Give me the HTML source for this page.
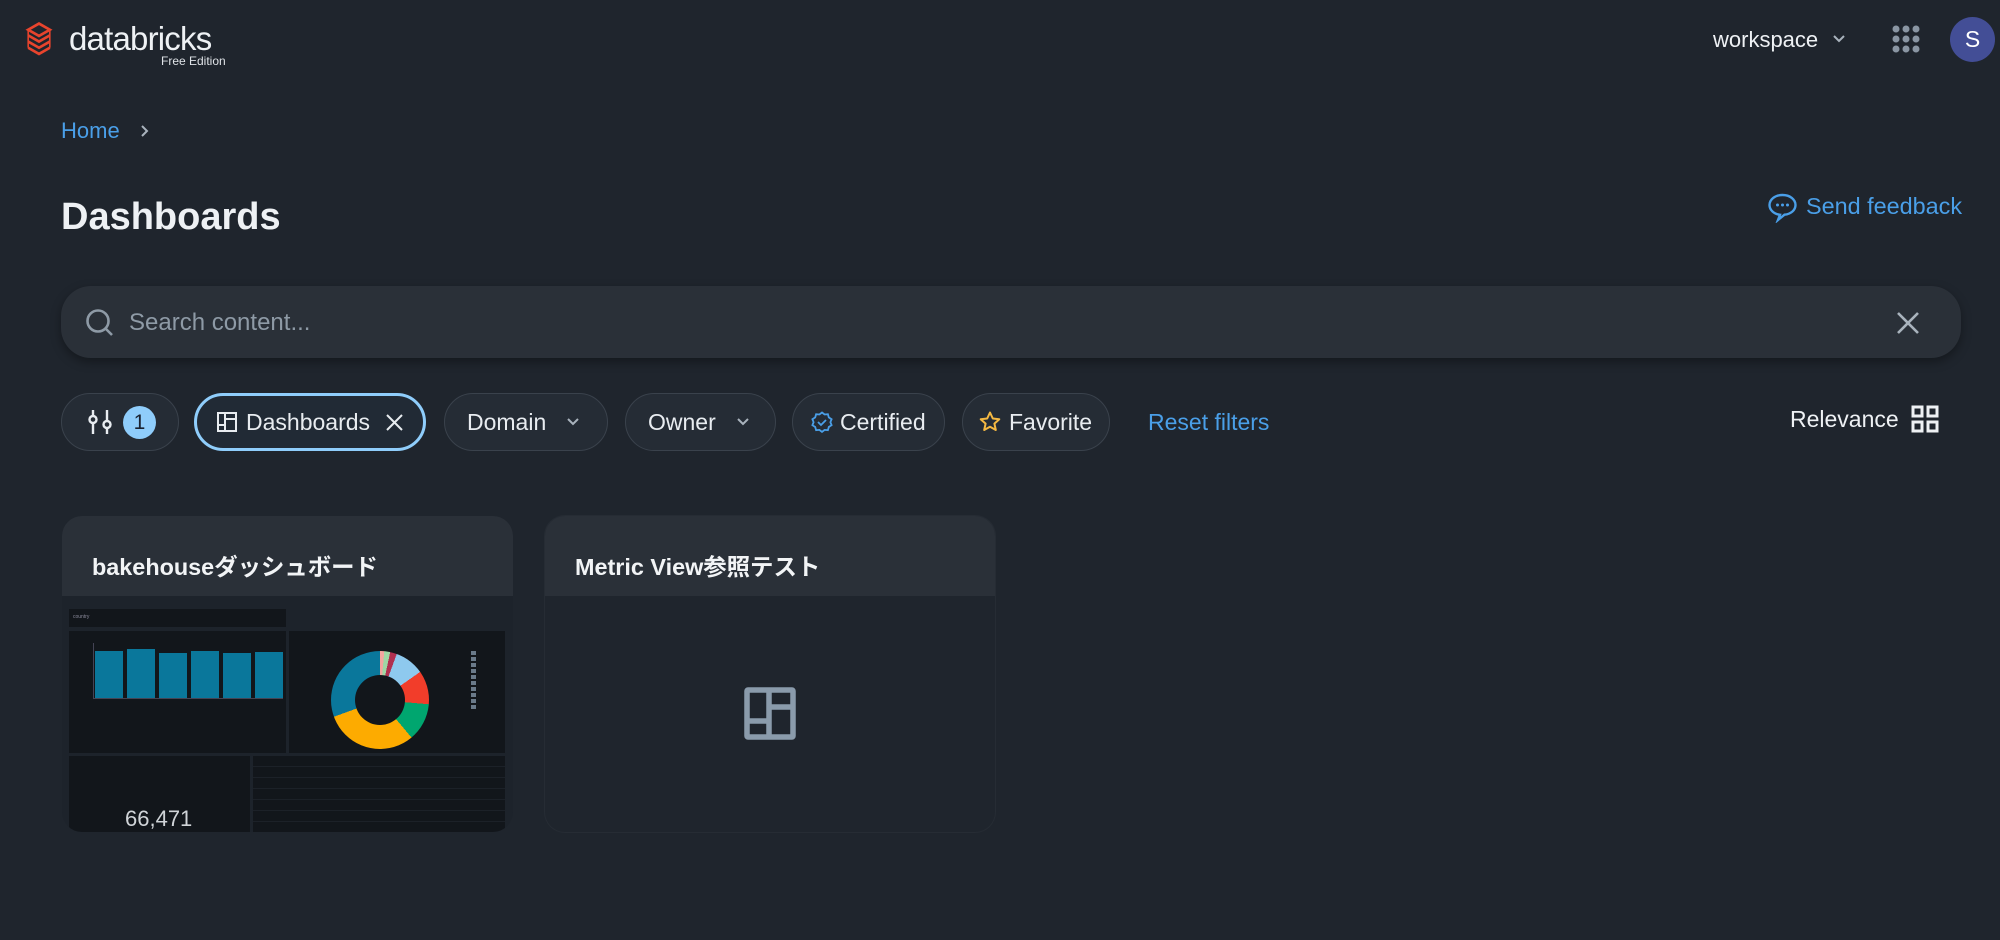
<!DOCTYPE html>
<html><head><meta charset="utf-8"><style>
*{box-sizing:border-box;margin:0;padding:0}
body{width:2000px;height:940px;overflow:hidden;background:#1f252d;font-family:"Liberation Sans","Noto Sans CJK JP",sans-serif;color:#e8ecf0;position:relative}
.a{position:absolute}
.pill{position:absolute;top:393px;height:58px;border-radius:29px;background:#252c35;border:1px solid #3a424c;display:flex;align-items:center;font-size:23px;color:#e8ecf0}
.panel{position:absolute;background:#12161b}
</style></head><body>
<!-- logo -->
<svg class="a" style="left:24px;top:22px" width="30" height="34" viewBox="0 0 25 33"><g fill="none" stroke="#e8442d" stroke-width="2.6"><path d="M12.5 1.5L23 7.5 12.5 13.5 2 7.5z"/><path d="M2 13l10.5 6L23 13"/><path d="M2 19l10.5 6L23 19"/><path d="M2 25l10.5 6L23 25"/><path d="M2 7.5v17.5M23 7.5v17.5" stroke-width="1.5"/></g></svg>
<div class="a" style="left:69px;top:20px;font-size:33px;color:#eef1f4;letter-spacing:-0.8px">databricks</div>
<div class="a" style="left:161px;top:54px;font-size:12px;color:#dfe3e7">Free Edition</div>
<!-- top right -->
<div class="a" style="left:1713px;top:27px;font-size:22px;color:#eef1f4">workspace</div>
<svg class="a" style="left:1832px;top:34px" width="14" height="10"><path d="M2 2l5 5 5-5" stroke="#a9b3bd" stroke-width="2" fill="none"/></svg>
<svg class="a" style="left:1892px;top:25px" width="28" height="28"><g fill="#8a96a3"><circle cx="4" cy="4" r="3.5"/><circle cx="14" cy="4" r="3.5"/><circle cx="24" cy="4" r="3.5"/><circle cx="4" cy="14" r="3.5"/><circle cx="14" cy="14" r="3.5"/><circle cx="24" cy="14" r="3.5"/><circle cx="4" cy="24" r="3.5"/><circle cx="14" cy="24" r="3.5"/><circle cx="24" cy="24" r="3.5"/></g></svg>
<div class="a" style="left:1950px;top:17px;width:45px;height:45px;border-radius:50%;background:#434e96;color:#fff;font-size:23px;text-align:center;line-height:45px">S</div>
<!-- breadcrumb -->
<div class="a" style="left:61px;top:118px;font-size:22px;color:#4a9fe8">Home</div>
<svg class="a" style="left:140px;top:124px" width="10" height="14"><path d="M2 2l5 5-5 5" stroke="#a9b3bd" stroke-width="2" fill="none"/></svg>
<div class="a" style="left:61px;top:196px;font-size:38px;font-weight:bold;color:#eef1f4">Dashboards</div>
<!-- feedback -->
<svg class="a" style="left:1767px;top:193px" width="31" height="30" viewBox="0 0 31 30"><path d="M15.5 2C8 2 2.5 6.5 2.5 12c0 5 4.5 9 10.5 9.8L11 27l6.5-5.3C24 21 28.5 17 28.5 12 28.5 6.5 23 2 15.5 2z" fill="none" stroke="#4a9fe8" stroke-width="2.4"/><g fill="#4a9fe8"><circle cx="10.5" cy="12" r="1.5"/><circle cx="15.5" cy="12" r="1.5"/><circle cx="20.5" cy="12" r="1.5"/></g></svg>
<div class="a" style="left:1806px;top:193px;font-size:23.4px;color:#4a9fe8">Send feedback</div>
<!-- search -->
<div class="a" style="left:61px;top:286px;width:1900px;height:72px;border-radius:30px;background:#2a3038;box-shadow:0 4px 10px rgba(0,0,0,.35)"></div>
<svg class="a" style="left:85px;top:308px" width="30" height="30"><circle cx="13" cy="13" r="10.5" fill="none" stroke="#8e9aa6" stroke-width="2.6"/><path d="M21 21l6 6" stroke="#8e9aa6" stroke-width="2.6"/></svg>
<div class="a" style="left:129px;top:309px;font-size:24px;color:#8e9aa6">Search content...</div>
<svg class="a" style="left:1896px;top:311px" width="24" height="24"><path d="M2 2l20 20M22 2L2 22" stroke="#a9b3bd" stroke-width="2.6"/></svg>
<!-- filters -->
<div class="pill" style="left:61px;width:118px;padding-left:25px">
<svg width="26" height="28" viewBox="0 0 26 28"><g fill="none" stroke="#e8ecf0" stroke-width="2.4"><path d="M6 2v6M6 15v11M20 2v11M20 20v6"/><circle cx="6" cy="11.5" r="3.5"/><circle cx="20" cy="16.5" r="3.5"/></g></svg>
<div style="margin-left:10px;width:33px;height:33px;border-radius:50%;background:#8fcdfb;color:#1a2230;text-align:center;line-height:33px;font-size:21px">1</div></div>
<div class="pill" style="left:194px;width:232px;border:3px solid #8fcdfb;background:#212a35;padding-left:20px">
<svg width="20" height="20" viewBox="0 0 20 20"><g fill="none" stroke="#e8ecf0" stroke-width="2"><rect x="1" y="1" width="18" height="18"/><path d="M8 1v18M8 13H1M8 7h11"/></g></svg>
<span style="margin-left:9px">Dashboards</span>
<svg style="margin-left:16px" width="17" height="17"><path d="M1 1l15 15M16 1L1 16" stroke="#e8ecf0" stroke-width="2"/></svg></div>
<div class="pill" style="left:444px;width:164px;padding-left:22px"><span>Domain</span><svg style="margin-left:20px" width="14" height="10"><path d="M2 2l5 5 5-5" stroke="#a9b3bd" stroke-width="2" fill="none"/></svg></div>
<div class="pill" style="left:625px;width:151px;padding-left:22px"><span>Owner</span><svg style="margin-left:20px" width="14" height="10"><path d="M2 2l5 5 5-5" stroke="#a9b3bd" stroke-width="2" fill="none"/></svg></div>
<div class="pill" style="left:792px;width:153px;padding-left:18px">
<svg width="22" height="22" viewBox="0 0 22 22"><path d="M11 1.5l2.6 2 3.3-.3.9 3.2 2.8 1.8-1.2 3 1.2 3-2.8 1.8-.9 3.2-3.3-.3-2.6 2-2.6-2-3.3.3-.9-3.2L1.4 14.2l1.2-3-1.2-3 2.8-1.8.9-3.2 3.3.3z" fill="none" stroke="#4a9fe8" stroke-width="1.8"/><path d="M7 11l3 3 5-5" fill="none" stroke="#4a9fe8" stroke-width="1.8"/></svg>
<span style="margin-left:7px">Certified</span></div>
<div class="pill" style="left:962px;width:148px;padding-left:16px">
<svg width="22" height="22" viewBox="0 0 22 22"><path d="M11 1.5l2.8 6 6.5.7-4.9 4.4 1.4 6.4L11 15.7l-5.8 3.3 1.4-6.4L1.7 8.2l6.5-.7z" fill="none" stroke="#f5b942" stroke-width="2" stroke-linejoin="round"/></svg>
<span style="margin-left:8px">Favorite</span></div>
<div class="a" style="left:1148px;top:409px;font-size:23px;color:#4a9fe8">Reset filters</div>
<div class="a" style="left:1790px;top:406px;font-size:23px;color:#eef1f4">Relevance</div>
<svg class="a" style="left:1911px;top:405px" width="28" height="28"><g fill="none" stroke="#eef1f4" stroke-width="3"><rect x="2" y="2" width="9" height="9"/><rect x="17" y="2" width="9" height="9"/><rect x="2" y="17" width="9" height="9"/><rect x="17" y="17" width="9" height="9"/></g></svg>
<!-- card 1 -->
<div class="a" style="left:62px;top:516px;width:451px;height:316px;border-radius:20px;background:#1d232b;overflow:hidden">
<div style="height:80px;background:#2a3038;padding:32px 0 0 30px;font-size:23.4px;font-weight:bold;color:#f2f4f6">bakehouseダッシュボード</div>
<div class="panel" style="left:7px;top:93px;width:217px;height:18px;font-size:5px;color:#889;padding:5px 4px">country</div>
<div class="panel" style="left:7px;top:115px;width:217px;height:122px">
<div class="a" style="left:24px;top:12px;width:1px;height:56px;background:#445"></div>
<div class="a" style="left:24px;top:67px;width:190px;height:1px;background:#445"></div>
<div class="a" style="left:26px;top:20px;width:28px;height:47px;background:#0a779b"></div>
<div class="a" style="left:58px;top:18px;width:28px;height:49px;background:#0a779b"></div>
<div class="a" style="left:90px;top:22px;width:28px;height:45px;background:#0a779b"></div>
<div class="a" style="left:122px;top:20px;width:28px;height:47px;background:#0a779b"></div>
<div class="a" style="left:154px;top:22px;width:28px;height:45px;background:#0a779b"></div>
<div class="a" style="left:186px;top:21px;width:28px;height:46px;background:#0a779b"></div>
</div>
<div class="panel" style="left:227px;top:115px;width:216px;height:122px">
<div class="a" style="left:42px;top:20px;width:98px;height:98px;border-radius:50%;background:conic-gradient(#f4a5a0 0 5deg,#9ed8a5 5deg 12deg,#b03050 12deg 20deg,#8ec9ee 20deg 55deg,#f23d2a 55deg 95deg,#00a66f 95deg 140deg,#fdab00 140deg 250deg,#0a779b 250deg 360deg)"></div>
<div class="a" style="left:66px;top:44px;width:50px;height:50px;border-radius:50%;background:#12161b"></div>
<div class="a" style="left:182px;top:20px;width:5px;height:60px;background:repeating-linear-gradient(#6a7a8a 0 4px,transparent 4px 6px)"></div>
</div>
<div class="panel" style="left:7px;top:240px;width:181px;height:80px">
<div class="a" style="left:56px;top:50px;font-size:22px;color:#d0d4d8">66,471</div></div>
<div class="panel" style="left:191px;top:240px;width:252px;height:80px;background:repeating-linear-gradient(#12161b 0 10px,#1c2128 10px 11px)"></div>
</div>
<!-- card 2 -->
<div class="a" style="left:545px;top:516px;width:450px;height:316px;border-radius:20px;background:#1f252d;overflow:hidden;box-shadow:0 0 0 1px #262c34">
<div style="height:80px;background:#2a3038;padding:32px 0 0 30px;font-size:23.4px;font-weight:bold;color:#f2f4f6">Metric View参照テスト</div>
</div>
<svg class="a" style="left:744px;top:687px" width="52" height="53" viewBox="0 0 52 53"><g fill="none" stroke="#8a9bab" stroke-width="5.5"><rect x="3" y="3" width="46" height="47" rx="1"/><path d="M25 3v47M25 20h24M3 34h22"/></g></svg>
</body></html>
